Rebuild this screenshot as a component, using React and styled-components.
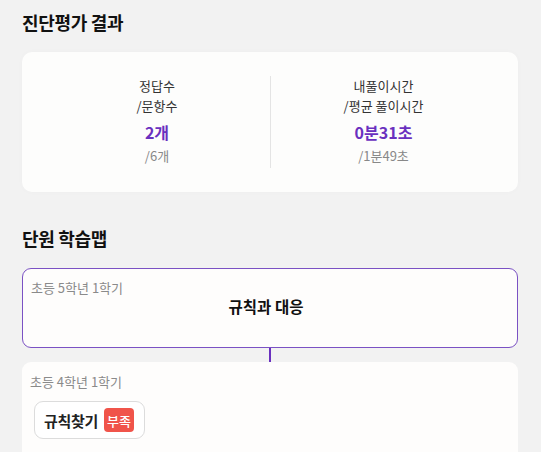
import React from "react";
import styled, { createGlobalStyle } from "styled-components";

const Global = createGlobalStyle`
  html, body { margin: 0; padding: 0; background: #f2f2f2; }
  body { font-family: "Noto Sans CJK KR", "Noto Sans", sans-serif; color: #222; }
`;

const Page = styled.div`
  padding: 10px 23px 0 22px;
  height: 452px;
  box-sizing: border-box;
  overflow: hidden;
`;

const SectionTitle = styled.h2`
  margin: 0 0 ${(p) => p.$gap || 18}px;
  font-size: 18px;
  line-height: 24px;
  font-weight: 700;
  color: #111;
  letter-spacing: -0.3px;
`;

const ResultCard = styled.div`
  background: #fdfdfc;
  border-radius: 10px;
  padding: 24px 22px 24px;
  display: grid;
  grid-template-columns: 1fr 1fr;
  margin-bottom: 34px;
  box-shadow: 0 0 6px rgba(0, 0, 0, 0.02);
`;

const Stat = styled.div`
  display: flex;
  flex-direction: column;
  align-items: center;
  border-left: ${(p) => (p.$divider ? "1px solid #e4e4e4" : "none")};
`;

const Label = styled.div`
  font-size: 13px;
  line-height: 20px;
  color: #333;
  text-align: center;
`;

const Value = styled.div`
  margin-top: 5px;
  font-size: 16px;
  line-height: 22px;
  font-weight: 700;
  color: #6a30bf;
`;

const Sub = styled.div`
  margin-top: 3px;
  font-size: 13px;
  line-height: 20px;
  color: #888;
  margin-bottom: 2px;
`;

const UnitBox = styled.div`
  box-sizing: border-box;
  height: 80px;
  background: #fefdfc;
  border: 1px solid #7b52c4;
  border-radius: 9px;
  padding: 9px 8px;
`;

const Grade = styled.div`
  font-size: 13px;
  line-height: 20px;
  color: #8a8a8a;
`;

const UnitName = styled.div`
  text-align: center;
  font-size: 15.5px;
  line-height: 16px;
  font-weight: 700;
  color: #111;
  margin-right: 8px;
`;

const Connector = styled.div`
  width: 2px;
  height: 14px;
  margin: 0 auto;
  background: #6a30bf;
`;

const PrereqBox = styled.div`
  background: #fefdfc;
  border-radius: 9px;
  padding: 10px 8px 20px;
  height: 120px;
`;

const Chips = styled.div`
  display: flex;
  gap: 8px;
  margin-top: 9px;
  padding-left: 4px;
`;

const Chip = styled.div`
  display: inline-flex;
  align-items: center;
  gap: 6px;
  height: 38px;
  box-sizing: border-box;
  padding: 0 10px 0 9px;
  border: 1px solid #dcdcdc;
  border-radius: 9px;
  background: #fff;
`;

const ChipText = styled.span`
  font-size: 15px;
  font-weight: 700;
  color: #222;
  letter-spacing: -0.3px;
`;

const Badge = styled.span`
  display: inline-flex;
  align-items: center;
  justify-content: center;
  height: 24px;
  padding: 0 3px;
  border-radius: 4px;
  background: ${(p) => p.$bg || "#f0544a"};
  color: #fff;
  font-size: 13px;
  font-weight: 500;
`;

export default function App() {
  return (
    <>
      <Global />
      <Page>
        <SectionTitle>진단평가 결과</SectionTitle>
        <ResultCard>
          <Stat>
            <Label>정답수</Label>
            <Label>/문항수</Label>
            <Value>2개</Value>
            <Sub>/6개</Sub>
          </Stat>
          <Stat $divider>
            <Label>내풀이시간</Label>
            <Label>/평균 풀이시간</Label>
            <Value>0분31초</Value>
            <Sub>/1분49초</Sub>
          </Stat>
        </ResultCard>
        <SectionTitle>단원 학습맵</SectionTitle>
        <UnitBox>
          <Grade>초등 5학년 1학기</Grade>
          <UnitName>규칙과 대응</UnitName>
        </UnitBox>
        <Connector />
        <PrereqBox>
          <Grade>초등 4학년 1학기</Grade>
          <Chips>
            <Chip>
              <ChipText>규칙찾기</ChipText>
              <Badge>부족</Badge>
            </Chip>
          </Chips>
        </PrereqBox>
      </Page>
    </>
  );
}
